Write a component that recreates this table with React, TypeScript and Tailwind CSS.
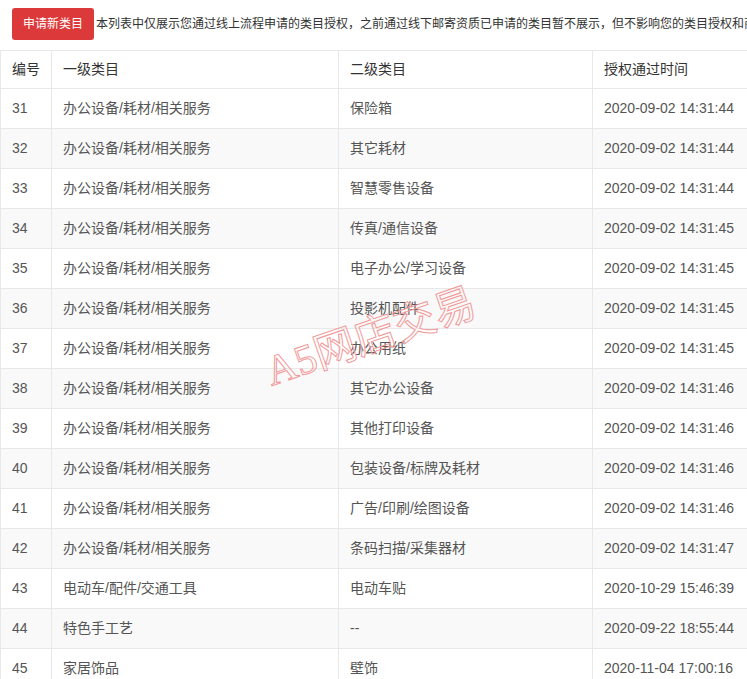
const rows = [
  ["31", "办公设备/耗材/相关服务", "保险箱", "2020-09-02 14:31:44"],
  ["32", "办公设备/耗材/相关服务", "其它耗材", "2020-09-02 14:31:44"],
  ["33", "办公设备/耗材/相关服务", "智慧零售设备", "2020-09-02 14:31:44"],
  ["34", "办公设备/耗材/相关服务", "传真/通信设备", "2020-09-02 14:31:45"],
  ["35", "办公设备/耗材/相关服务", "电子办公/学习设备", "2020-09-02 14:31:45"],
  ["36", "办公设备/耗材/相关服务", "投影机配件", "2020-09-02 14:31:45"],
  ["37", "办公设备/耗材/相关服务", "办公用纸", "2020-09-02 14:31:45"],
  ["38", "办公设备/耗材/相关服务", "其它办公设备", "2020-09-02 14:31:46"],
  ["39", "办公设备/耗材/相关服务", "其他打印设备", "2020-09-02 14:31:46"],
  ["40", "办公设备/耗材/相关服务", "包装设备/标牌及耗材", "2020-09-02 14:31:46"],
  ["41", "办公设备/耗材/相关服务", "广告/印刷/绘图设备", "2020-09-02 14:31:46"],
  ["42", "办公设备/耗材/相关服务", "条码扫描/采集器材", "2020-09-02 14:31:47"],
  ["43", "电动车/配件/交通工具", "电动车贴", "2020-10-29 15:46:39"],
  ["44", "特色手工艺", "--", "2020-09-22 18:55:44"],
  ["45", "家居饰品", "壁饰", "2020-11-04 17:00:16"],
];

const cols = ["w-[51px]", "w-[287px]", "w-[254px]", "w-[220px]"];

export default function App() {
  return (
    <div className="relative h-[679px] w-[747px] overflow-hidden bg-white font-['Liberation_Sans','Noto_Sans_CJK_SC',sans-serif] text-[14px] text-[#555]">
      <div className="flex items-center whitespace-nowrap pl-3 pt-2">
        <button className="h-8 w-[82px] shrink-0 rounded-[3px] bg-[#dc3a3a] p-0 text-[12px] text-white">
          申请新类目
        </button>
        <span className="ml-[2px] text-[12px] text-[#333]">
          本列表中仅展示您通过线上流程申请的类目授权，之前通过线下邮寄资质已申请的类目暂不展示，但不影响您的类目授权和商品发布
        </span>
      </div>

      <table className="mt-[10px] w-[812px] table-fixed border-collapse">
        <thead>
          <tr className="h-[38px] text-left text-[#333]">
            {["编号", "一级类目", "二级类目", "授权通过时间"].map((h, i) => (
              <th
                key={h}
                className={`${cols[i]} border border-[#e8e8e8] pl-[11px] font-normal`}
              >
                {h}
              </th>
            ))}
          </tr>
        </thead>
        <tbody>
          {rows.map((r, idx) => (
            <tr
              key={r[0]}
              className={`h-10 ${idx % 2 === 1 ? "bg-[#f9f9f9]" : "bg-white"}`}
            >
              {r.map((c, i) => (
                <td
                  key={i}
                  className="whitespace-nowrap border border-[#e8e8e8] pl-[11px]"
                >
                  {c}
                </td>
              ))}
            </tr>
          ))}
        </tbody>
      </table>

      {/* watermark */}
      <div className="pointer-events-none absolute left-[261px] top-[316px] -rotate-[19deg] whitespace-nowrap font-['Liberation_Serif','Noto_Sans_CJK_SC',serif] text-[42px] leading-none text-transparent [-webkit-text-stroke:1px_#f29a9a]">
        A5网店交易
      </div>
    </div>
  );
}
